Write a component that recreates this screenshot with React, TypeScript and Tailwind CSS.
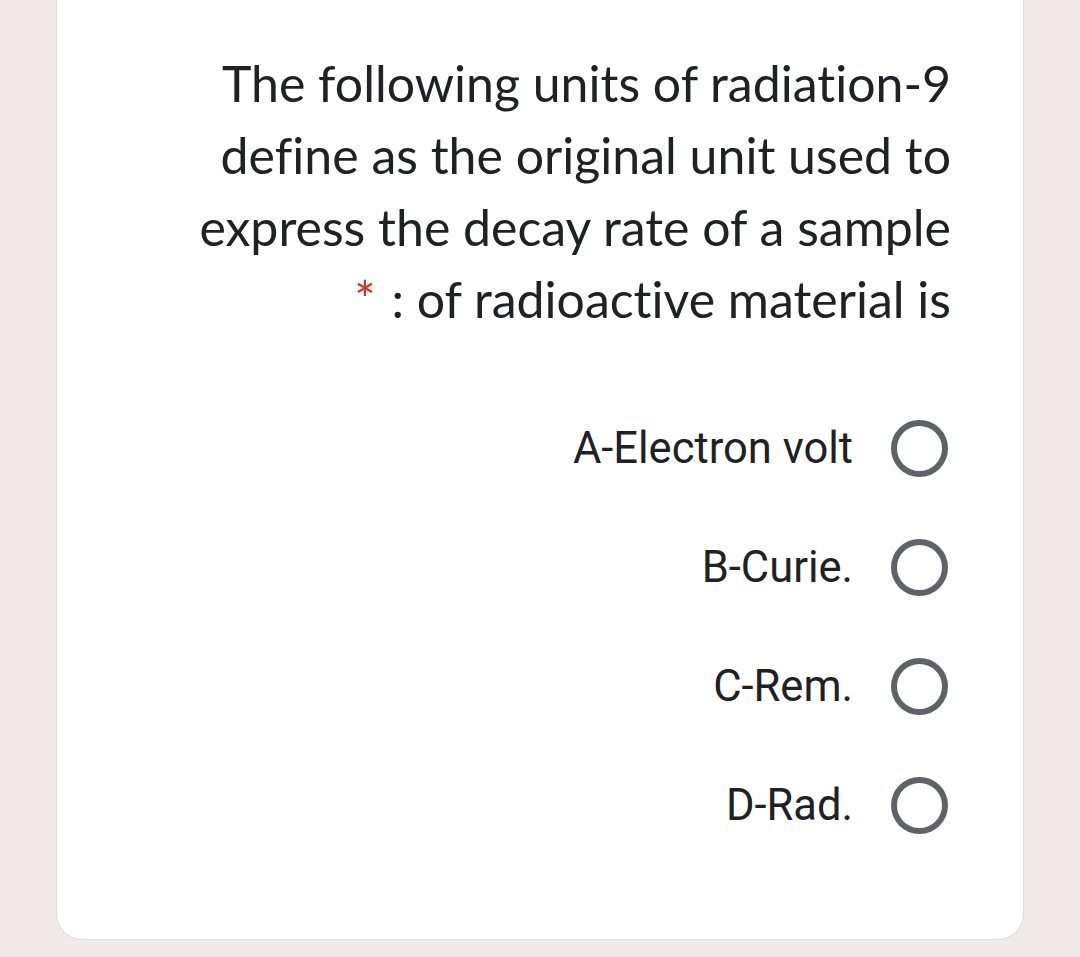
import React from "react";

const lines = [
  "The following units of radiation-9",
  "define as the original unit used to",
  "express the decay rate of a sample",
];

const options = ["A-Electron volt", "B-Curie.", "C-Rem.", "D-Rad."];

export default function App() {
  return (
    <div className="min-h-[957px] bg-[#f0ebea] px-[56px]">
      <div className="bg-white border-x border-b border-[#dadce0] rounded-b-[26px] pt-[47px] pb-[74px] pr-[75px]">
        {/* Question title */}
        <div className="-mr-[3px] text-right text-[#202124] text-[50px] leading-[72px] font-['Lato',sans-serif] [font-variant-ligatures:none]">
          {lines.map((line) => (
            <div key={line}>{line}</div>
          ))}
          <div>
            <span className="text-[#d93025] mr-[16px]">*</span>: of radioactive material is
          </div>
        </div>

        {/* Options */}
        <div className="mt-[54px] flex flex-col">
          {options.map((opt) => (
            <div key={opt} className="h-[119px] flex items-center justify-end gap-[38px]">
              <span className="text-[43.5px] text-[#202124] font-['Roboto',sans-serif]">{opt}</span>
              <div className="w-[57px] h-[57px] rounded-full border-[6px] border-[#5f6368]" />
            </div>
          ))}
        </div>
      </div>
    </div>
  );
}
